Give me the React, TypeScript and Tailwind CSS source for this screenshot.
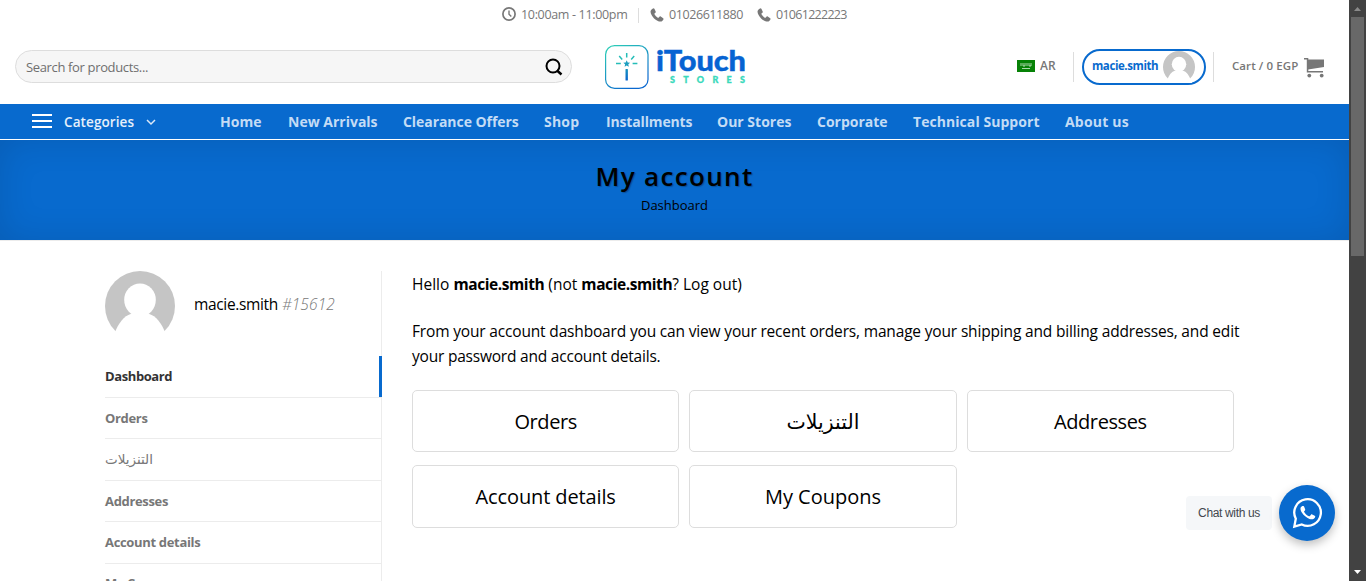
import React from "react";

const navItems = [
  { label: "Home", box: "w-[68px]" },
  { label: "New Arrivals", box: "w-[115px]" },
  { label: "Clearance Offers", box: "w-[141px] tracking-[-0.06px]" },
  { label: "Shop", box: "w-[62px] tracking-[0.2px]" },
  { label: "Installments", box: "w-[111px] tracking-[-0.15px]" },
  { label: "Our Stores", box: "w-[100px]" },
  { label: "Corporate", box: "w-[96px]" },
  { label: "Technical Support", box: "w-[152px] tracking-[0.06px]" },
  { label: "About us", box: "w-[70px] tracking-[0.2px]" },
];

const sideItems = [
  { label: "Orders" },
  { label: "التنزيلات", arabic: true },
  { label: "Addresses" },
  { label: "Account details" },
  { label: "My Coupons" },
];

const cards = [
  { label: "Orders", box: "h-[62px] tracking-[-0.4px]" },
  { label: "التنزيلات", box: "h-[62px] text-[20.5px]" },
  { label: "Addresses", box: "h-[62px] tracking-[-0.4px]" },
  { label: "Account details", box: "h-[63px] tracking-[-0.12px]" },
  { label: "My Coupons", box: "h-[63px]" },
];

function Avatar({ className }: { className: string }) {
  return (
    <svg viewBox="0 0 70 70" className={className}>
      <circle cx="35" cy="35" r="35" fill="#c5c5c5" />
      <ellipse cx="35" cy="29" rx="15.8" ry="16.5" fill="#fff" />
      <path d="M10.5 60C15 49 22 43 28 42.5L42 42.5C48 43 55 49 59.5 60L64 71H6Z" fill="#fff" />
    </svg>
  );
}

function Phone({ className }: { className: string }) {
  return (
    <svg viewBox="0 0 14 14" className={className} fill="currentColor">
      <path d="M3.200.4C2.500.5.5 1.700.5 3.600c0 2 1.700 5 3.600 6.800 2 1.900 4.600 3.200 6.400 3.200 1.500 0 2.700-1.500 3-2.400.1-.4 0-.7-.3-.9L10.700 8.500c-.4-.3-.9-.2-1.200.2l-.7.9c-.3.3-.7.3-1 .1C6.600 9 5.200 7.500 4.500 6.300c-.2-.4-.1-.8.2-1l.7-.6c.4-.3.5-.7.3-1.200L4.500.9C4.300.5 3.800.3 3.200.4Z" />
    </svg>
  );
}

function WhatsApp() {
  return (
    <svg width="32" height="32" viewBox="0 0 32 32" fill="none" className="ml-px">
      <path d="M3.800 21.700A13.300 13.300 0 1 1 9.800 27.500L2.300 29.600Z" stroke="#fff" strokeWidth="2.300" strokeLinejoin="miter" />
      <path d="M11 9c-.6-.1-1.900.4-2.300 1.600-.5 1.500 0 3.300 1.300 5.200 1.700 2.600 4.300 5 7.500 6.100 1.700.6 3.200.5 4.300-.2 1-.6 1.600-1.800 1.400-2.500-.1-.3-.4-.5-3-1.700-.5-.2-.9-.2-1.200.2l-1.100 1.400c-.3.3-.6.3-1 .1-2.100-.9-3.700-2.400-4.700-4.200-.2-.4-.1-.6.2-.9.5-.5 1-1.100.8-1.700-.2-.7-.9-2.300-1.200-2.900C11.800 9.100 11.500 9 11 9Z" fill="#fff" />
    </svg>
  );
}

function Logo() {
  return (
    <svg width="144" height="46" viewBox="0 0 144 46" className="shrink-0">
      <defs>
        <linearGradient id="edge" x1="0" y1="0" x2="0.6" y2="1">
          <stop offset="0" stopColor="#2fd3b6" />
          <stop offset="1" stopColor="#0a68cf" />
        </linearGradient>
        <linearGradient id="wand" x1="0" y1="24" x2="0" y2="37" gradientUnits="userSpaceOnUse">
          <stop offset="0" stopColor="#1797bd" />
          <stop offset="1" stopColor="#0a62d0" />
        </linearGradient>
      </defs>
      <rect x="1.6" y="1.6" width="42.4" height="42.8" rx="9" fill="none" stroke="url(#edge)" strokeWidth="1.2" />
      <path d="M22.700 9v4.600M15.200 12l3 3.400M30.200 12l-3 3.400M12 19.500h4.800M28.600 19.500h4.800" stroke="#25bdb8" strokeWidth="1.500" fill="none" />
      <path d="M22.700 16.300l1 2.200 2.400.2-1.800 1.600.5 2.400-2.100-1.300-2.100 1.300.5-2.400-1.800-1.600 2.400-.2z" fill="#1d9fc0" />
      <rect x="21.500" y="25" width="2.400" height="11.600" rx=".5" fill="url(#wand)" />
      <text x="52" y="27" textLength="90" lengthAdjust="spacingAndGlyphs" fontFamily="Lato, sans-serif" fontWeight="900" fontSize="27.500" fill="#0663d2" stroke="#0663d2" strokeWidth=".4">iTouch</text>
      <text x="66" y="39" textLength="75" fontFamily="Lato, sans-serif" fontWeight="900" fontSize="9" fill="#39d9bb" stroke="#39d9bb" strokeWidth=".3">STORES</text>
    </svg>
  );
}

function CartIcon() {
  return (
    <svg width="21" height="20" viewBox="0 0 21 20" fill="#777">
      <path d="M0 0H4.300V13H19V14.500H2.800V1.500H0Z" />
      <path d="M4 1.500H20V9L4 11.500Z" />
      <circle cx="5.300" cy="17.600" r="1.900" />
      <circle cx="17.700" cy="17.600" r="1.900" />
    </svg>
  );
}

export default function App() {
  return (
    <div className="relative flex h-[581px] w-[1366px] overflow-hidden bg-white font-['Open_Sans','DejaVu_Sans',sans-serif] text-black">
      <div className="flex h-full w-[1349px] flex-col overflow-hidden">
        <div className="flex h-[30px] shrink-0 items-center pl-[502px] text-[12.5px] whitespace-nowrap text-[#777]">
          <svg width="14" height="14" viewBox="0 0 14 14" fill="none" stroke="#777" strokeWidth="1.700" className="mb-[2px]">
            <circle cx="7" cy="7" r="6.100" />
            <path d="M7 3.500V7.200L9.300 9.500" strokeWidth="1.400" />
          </svg>
          <span className="ml-[5px] w-[106px] tracking-[-0.33px]">10:00am - 11:00pm</span>
          <span className="ml-[11px] h-[15px] w-px bg-[#ddd]" />
          <Phone className="mb-px ml-[11px] h-[14px] w-[14px]" />
          <span className="ml-[5px] w-[74px] tracking-[-0.42px]">01026611880</span>
          <Phone className="mb-px ml-[14px] h-[14px] w-[14px]" />
          <span className="ml-[5px] w-[74px] tracking-[-0.72px]">01061222223</span>
        </div>

        <header className="flex h-[74px] shrink-0 items-center whitespace-nowrap">
          <div className="mb-[2px] ml-[15px] flex h-[33px] w-[557px] items-center justify-between rounded-full border border-[#ddd] bg-[#f6f6f6] pr-[8px] pl-[10px] text-[13px] text-[#6f6f6f]">
            <span className="mt-[3px] tracking-[-0.35px]">Search for products...</span>
            <svg width="18" height="18" viewBox="0 0 18 18" fill="none" stroke="#000" strokeWidth="2" className="mt-[2px]">
              <circle cx="8" cy="8" r="6.500" />
              <path d="M12 12.500l4.500 4" strokeWidth="2.500" />
            </svg>
          </div>
          <div className="ml-[32px]"><Logo /></div>
          <div className="mb-[3px] ml-[269px] flex h-[12px] w-[18px] items-center justify-center bg-[#078207]">
            <svg width="12" height="8" viewBox="0 0 12 8" stroke="#d8edd8" fill="none">
              <path d="M1 1v3M3 1v3h2V1M7 1v3M9 1v3h2V1" strokeWidth=".8" />
              <path d="M2 6.500h8" strokeWidth=".8" />
            </svg>
          </div>
          <span className="mb-[2px] ml-[5px] w-[16px] text-[12px] font-semibold text-[#777]">AR</span>
          <span className="ml-[17px] h-[30px] w-px bg-[#ddd]" />
          <div className="ml-[8px] flex h-[36px] w-[124px] items-center justify-between rounded-full border-2 border-[#086ace] pr-[9px] pl-[8px] text-[11.5px] font-bold text-[#086ace]">
            <span className="mb-[2px] tracking-[-0.42px]">macie.smith</span>
            <Avatar className="h-[32px] w-[32px]" />
          </div>
          <span className="ml-[7px] h-[30px] w-px bg-[#ddd]" />
          <span className="mb-[2px] ml-[18px] w-[67px] text-[11.5px] font-semibold tracking-[0.08px] text-[#777]">Cart / 0 EGP</span>
          <div className="mt-px ml-[5px]"><CartIcon /></div>
        </header>

        <nav className="flex h-[36px] shrink-0 items-center border-b border-white bg-[#086ace] whitespace-nowrap">
          <div className="mb-px ml-[32px] flex h-[14px] w-[20px] flex-col justify-between">
            <span className="h-[2px] bg-white" />
            <span className="h-[2px] bg-white" />
            <span className="h-[2px] bg-white" />
          </div>
          <span className="mt-px ml-[12px] w-[70px] text-[13.5px] font-semibold tracking-[0.1px] text-white/90">Categories</span>
          <svg width="10" height="7" viewBox="0 0 10 7" className="mt-[2px] ml-[12px]" fill="none" stroke="#dce9f8" strokeWidth="1.500">
            <path d="M1 1l4 4 4-4" />
          </svg>
          <div className="ml-[64px] flex text-[14px] font-bold text-[#c4dcf5]">
            {navItems.map((n) => (
              <span key={n.label} className={n.box}>{n.label}</span>
            ))}
          </div>
        </nav>

        <div className="flex h-[100px] shrink-0 flex-col items-center bg-[#086ace] shadow-[inset_0_0_35px_rgba(0,0,0,0.12)]">
          <h1 className="mt-[17px] text-[26px] leading-[38px] font-semibold tracking-[1.35px] [text-shadow:1px_1px_1px_rgba(0,0,0,0.25)]">My account</h1>
          <span className="mt-px text-[13px] leading-[19px]">Dashboard</span>
        </div>

        <main className="flex flex-1 border-t border-[#ececec] pt-[30px] pl-[105px]">
          <aside className="h-[340px] w-[277px] shrink-0 border-r border-[#ececec]">
            <div className="flex h-[85px] items-start">
              <Avatar className="h-[70px] w-[70px]" />
              <div className="mt-[21px] ml-[19px] text-[15.5px] leading-[24px] whitespace-nowrap">
                <span className="tracking-[-0.35px]">macie.smith</span>{" "}
                <i className="font-light tracking-[0.1px] text-[#777]">#15612</i>
              </div>
            </div>
            <div className="mr-[-1px] flex h-[41px] items-center border-r-3 border-[#086ace] text-[13px] font-bold tracking-[-0.4px] text-[#333]">Dashboard</div>
            {sideItems.map((s) => (
              <div key={s.label} className="flex h-[41.4px] items-center border-t border-[#ececec] text-[13px] font-bold text-[#777]">
                <span className={s.arabic ? "text-[13.5px] font-normal" : "mt-[0.8px] tracking-[-0.33px]"}>{s.label}</span>
              </div>
            ))}
          </aside>
          <section className="ml-[30px] w-[850px] text-[15.5px] leading-[25px]">
            <p className="mt-px tracking-[0.02px] whitespace-nowrap">
              Hello <b className="tracking-[-0.42px]">macie.smith</b> (not <b className="tracking-[-0.42px]">macie.smith</b>? Log out)
            </p>
            <p className="mt-[22px] tracking-[-0.168px] whitespace-nowrap">
              From your account dashboard you can view your recent orders, manage your shipping and billing addresses, and edit
              <br />
              <span className="tracking-[-0.21px]">your password and account details.</span>
            </p>
            <div className="mt-[21px] grid w-[822px] grid-cols-3 gap-x-[10px] gap-y-[13px] text-[20px]">
              {cards.map((c) => (
                <div key={c.label} className={`flex items-center justify-center rounded-[5px] border border-[#ddd] ${c.box}`}>{c.label}</div>
              ))}
            </div>
          </section>
        </main>
      </div>

      <div className="flex h-full w-[17px] flex-col items-center justify-between bg-[#424242]">
        <svg width="17" height="17" viewBox="0 0 17 17"><path d="M5 11l3.500-4L12 11z" fill="#8a8a8a" /></svg>
        <div className="h-[239px] w-[13px] bg-[#686868]" />
        <div className="flex-1" />
        <svg width="17" height="17" viewBox="0 0 17 17"><path d="M5 6l3.500 4L12 6z" fill="#fff" /></svg>
      </div>

      <div className="absolute top-[485px] left-[1186px] flex items-center">
        <div className="flex h-[34px] w-[86px] items-center justify-center rounded-[4px] bg-[#f5f7f9] font-['Liberation_Sans',sans-serif] text-[12px] tracking-[-0.35px] text-[#43474e]">Chat with us</div>
        <div className="ml-[7px] flex h-[56px] w-[56px] items-center justify-center rounded-full bg-[#086ace] shadow-[0_4px_10px_rgba(0,0,0,0.25)]">
          <WhatsApp />
        </div>
      </div>
    </div>
  );
}
